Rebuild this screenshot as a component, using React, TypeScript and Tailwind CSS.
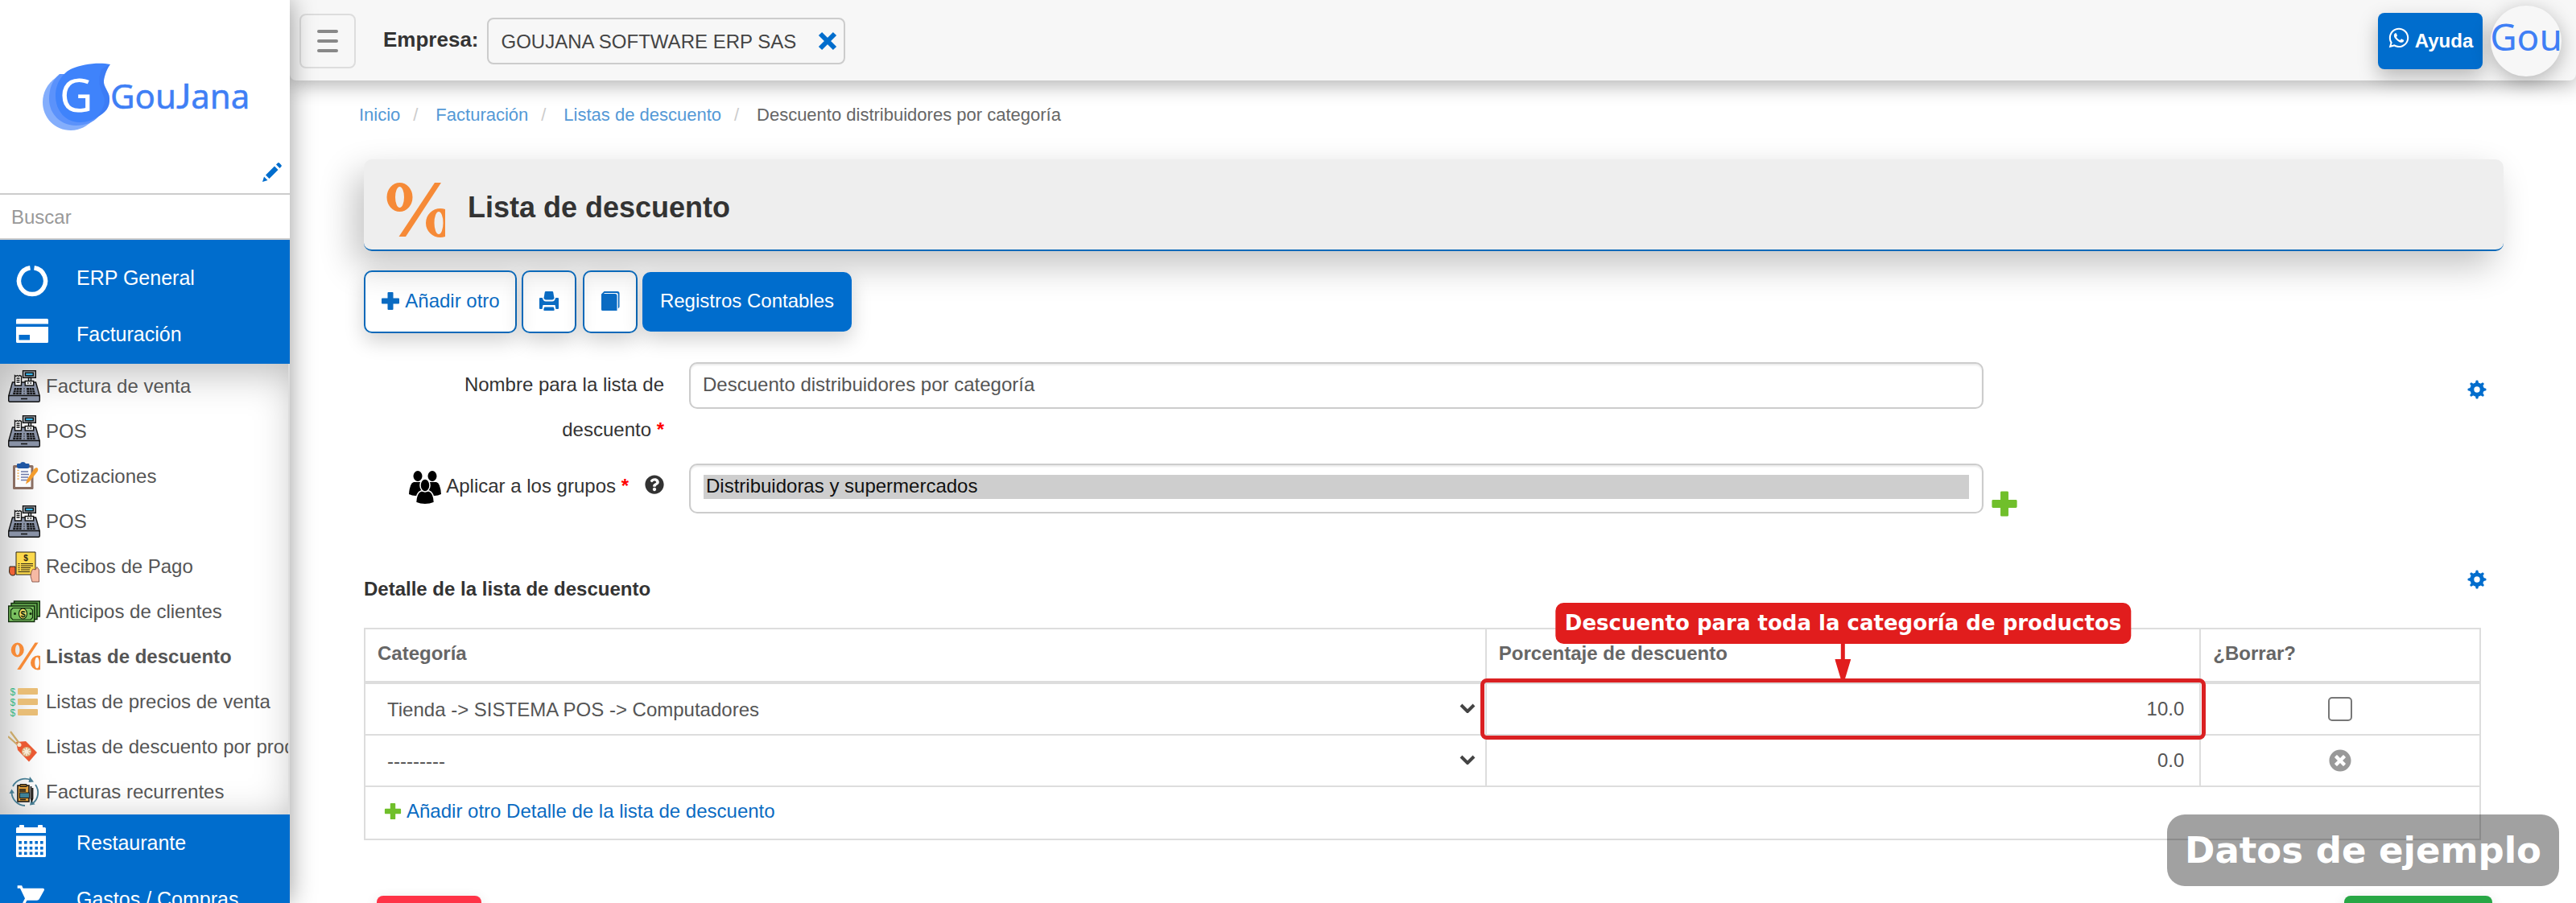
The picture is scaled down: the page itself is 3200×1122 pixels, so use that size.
import React from "react";
import { FaQuestionCircle, FaTimesCircle, FaWhatsapp } from "react-icons/fa";
import { MdShoppingCart } from "react-icons/md";

/* ---------- logo ---------- */

function Logo() {
  return (
    <svg viewBox="0 0 260 90" className="w-[260px]" role="img" aria-label="GouJana">
      <path d="M20 20 C8 28 3 40 3 51 C3 70 18 86 38 86 C50 86 58 80 64 75 L60 20 Z" fill="#84aefc" />
      <path d="M24 16 C14 24 11 36 11 47 C11 66 26 80 44 80 C56 80 66 76 72 69 L66 16 Z" fill="#5b92fb" />
      <path
        d="M87 4 C72 1 52 4 40 9 C28 14 19 27 19 43 C19 62 32 76 49 76 C58 76 66 73 72 69 C80 64 87 58 86 46 C86 38 78 32 79 24 C80 17 83 9 87 4 Z"
        fill="#3f83fb"
      />
      <path d="M76 10 C70 28 76 36 79 44 C82 54 76 62 70 70 C80 65 87 58 86 46 C86 38 78 32 79 24 C80 17 83 9 87 4 Z" fill="#3a74ee" opacity="0.4" />
      <text x="24" y="63" fontFamily="Noto Sans, sans-serif" fontSize="57" fill="#fff">G</text>
      <text x="87" y="59" fontFamily="Noto Sans, sans-serif" fontSize="42" fill="#3f7ff5" stroke="#3f7ff5" strokeWidth="0.5">
        Gou<tspan fontFamily="Lato, sans-serif" fontSize="43">J</tspan>ana
      </text>
    </svg>
  );
}

/* ---------- monochrome icons ---------- */

function PencilIcon() {
  return (
    <svg viewBox="0 0 24 24" className="size-6" fill="currentColor" aria-hidden="true">
      <path d="M0 24 L2 17.500 L6.500 22 Z" />
      <path d="M4 15.500 L15 4.500 L19.500 9 L8.500 20 Z" />
      <path d="M17 2.500 L19 .5 Q20 -.3 21 .6 L23.400 3 Q24.200 4 23.400 5 L21.500 7 Z" />
    </svg>
  );
}

function RingIcon() {
  return (
    <svg viewBox="0 0 40 40" className="mt-2 size-10" fill="none" aria-hidden="true">
      <path d="M22.500 3.800 A16.500 16.500 0 1 1 17.500 3.800" stroke="currentColor" strokeWidth="5.500" />
    </svg>
  );
}

function CardIcon() {
  return (
    <svg viewBox="0 0 40 40" className="mb-2 size-10" fill="currentColor" aria-hidden="true">
      <path d="M1.500 5 H38.500 Q40 5 40 6.500 V11.500 H0 V6.500 Q0 5 1.500 5Z" />
      <path fillRule="evenodd" d="M0 15 H40 V33.500 Q40 35 38.500 35 H1.500 Q0 35 0 33.500Z M3.500 25 V31.500 H17 V25Z" />
    </svg>
  );
}

function CalendarIcon() {
  const holes: [number, number][] = [];
  [20, 27, 33.5].forEach((y) => [3.3, 10, 16.7, 23.4, 30].forEach((x) => holes.push([x, y])));
  return (
    <svg viewBox="0 0 40 40" className="mb-1 size-10" aria-hidden="true">
      <path fill="currentColor" d="M4 3 V1 Q4 0 5 0 H9 Q10 0 10 1 V3 H27 V1 Q27 0 28 0 H32 Q33 0 33 1 V3 H35.500 Q37 3 37 4.500 V10 H0 V4.500 Q0 3 1.500 3Z" />
      <path fill="currentColor" d="M0 13.500 H37 V38.500 Q37 40 35.500 40 H1.500 Q0 40 0 38.500Z" />
      {holes.map(([x, y]) => (
        <rect key={`${x}-${y}`} x={x} y={y} width="3.600" height="3.600" fill="#006dcd" />
      ))}
    </svg>
  );
}

function GearIcon() {
  return (
    <svg viewBox="0 0 24 24" className="size-6" aria-hidden="true">
      <circle cx="12" cy="12" r="6.200" fill="none" stroke="currentColor" strokeWidth="5" />
      {[0, 45, 90, 135, 180, 225, 270, 315].map((a) => (
        <path key={a} d="M9.800 4.500 L10.700 .8 Q12 0 13.300 .8 L14.200 4.500Z" fill="currentColor" transform={`rotate(${a} 12 12)`} />
      ))}
    </svg>
  );
}

function PlusIcon({ className }: { className: string }) {
  return (
    <svg viewBox="0 0 24 24" className={className} fill="currentColor" aria-hidden="true">
      <path d="M9.500 1 H14.500 Q15.500 1 15.500 2 V8.500 H22 Q23 8.500 23 9.500 V14.500 Q23 15.500 22 15.500 H15.500 V22 Q15.500 23 14.500 23 H9.500 Q8.500 23 8.500 22 V15.500 H2 Q1 15.500 1 14.500 V9.500 Q1 8.500 2 8.500 H8.500 V2 Q8.500 1 9.500 1Z" />
    </svg>
  );
}

function CrossIcon() {
  return (
    <svg viewBox="0 0 24 24" className="size-6" aria-hidden="true">
      <path d="M3 3 L21 21 M21 3 L3 21" stroke="currentColor" strokeWidth="6" />
    </svg>
  );
}

function PrinterIcon() {
  return (
    <svg viewBox="0 0 24 24" className="size-6" fill="currentColor" aria-hidden="true">
      <path d="M8 0 H16 Q17 0 17.200 1 L18.500 8.500 Q17.500 10.500 16 10.500 H8 Q6.500 10.500 5.500 8.500 L6.800 1 Q7 0 8 0Z" />
      <path d="M0 9 Q0 8 1 8 H3.800 Q5 12.500 8 12.500 H16 Q19 12.500 20.200 8 H23 Q24 8 24 9 V21 Q24 22 23 22 H20.500 L19.500 17 H4.500 L3.500 22 H1 Q0 22 0 21Z" />
      <path d="M7 19.500 H17 Q18 19.500 18.200 20.500 L18.700 23 Q18.800 24 17.500 24 H6.500 Q5.200 24 5.300 23 L5.800 20.500 Q6 19.500 7 19.500Z" />
    </svg>
  );
}

function BookIcon() {
  return (
    <svg viewBox="0 0 24 24" className="size-6" fill="currentColor" aria-hidden="true">
      <path d="M1 3.500 L4.500 0 H21 Q23.500 0 23.500 2.500 V19.500 L21.800 21.500 V4 Q21.800 2 20 2 H5 L4 3 H18 Q20.500 3 20.500 5.500 V24 H2.500 Q1 24 1 22.500Z" />
    </svg>
  );
}

function PeopleIcon() {
  return (
    <svg viewBox="0 0 40 42" className="mt-1 w-10 shrink-0" aria-hidden="true">
      <g fill="#000">
        <ellipse cx="11" cy="6.500" rx="5.500" ry="6.500" />
        <ellipse cx="29" cy="6.500" rx="5.500" ry="6.500" />
        <path d="M6 14 Q1 15 0 29 Q8 33 16 29 V14Z" />
        <path d="M34 14 Q39 15 40 29 Q32 33 24 29 V14Z" />
      </g>
      <g fill="#000" stroke="#fff" strokeWidth="1.500">
        <path d="M15 25 Q9 27 8.500 39.500 Q20 44 31.500 39.500 Q31 27 25 25Z" />
        <ellipse cx="20" cy="18" rx="6" ry="8" />
      </g>
    </svg>
  );
}

/* ---------- coloured menu icons ---------- */

function RegisterIcon() {
  return (
    <svg viewBox="0 0 40 40" className="size-10 shrink-0" aria-hidden="true">
      <g stroke="#111" strokeWidth="1.400">
        <rect x="18.500" y=".7" width="15.800" height="8.600" fill="#a9b0b8" />
        <rect x="21.500" y="3.200" width="9.800" height="3.600" fill="#35b5ea" />
        <rect x="25.500" y="9.300" width="3" height="5" fill="#d6dade" />
        <path d="M5.500 15 H34.500 L39.300 32 H.7Z" fill="#8992a6" />
        <rect x="21.200" y="13.500" width="10.500" height="5.500" fill="#eef0f1" />
        <path d="M8.500 6.500 L10 7.500 L11.500 6.500 L13 7.500 L14.500 6.500 L16.500 7.500 V19 H8.500Z" fill="#fff" />
        <rect x=".7" y="31.500" width="38.600" height="7.800" rx="1.500" fill="#8992a6" />
      </g>
      <path d="M10.500 10 H14.500 M10.500 12.500 H14.500 M10.500 15 H14.500 M16 35.500 H24 M24 16 H25.500 M27.500 16 H29" stroke="#111" strokeWidth="1.300" />
      <path d="M8 22 H17 L16.500 30 H6Z M23 22 H32 L34 30 H23.500Z" fill="#111" />
      <path d="M7.500 25 H17 M7 27.700 H17 M10.500 22 L9.500 30 M14 22 L13.500 30 M23 25 H33 M23 27.700 H33.500 M26.500 22 L27 30 M29.500 22 L30.500 30" stroke="#8992a6" strokeWidth=".7" />
      <path d="M19 23 H21 M19 26 H21 M19 29 H21" stroke="#333" strokeWidth="1" />
    </svg>
  );
}

function ClipboardIcon() {
  return (
    <svg viewBox="0 0 40 40" className="size-10 shrink-0" aria-hidden="true">
      <rect x="6" y="6" width="25.500" height="30" rx="1.500" fill="#8a6e62" />
      <rect x="9" y="9" width="19.500" height="24" fill="#fafbfd" />
      <path d="M11 7.500 V5 Q11 4 12.500 4 H15 Q16 2 18.500 2 Q21 2 22 4 H25 Q26.500 4 26.500 5 V7.500 Q26.500 10 24 10 H13.500 Q11 10 11 7.500Z" fill="#1f57a4" />
      <path d="M16 14 H25 M16 17.500 H26 M16 21 H25 M16 24.500 H24" stroke="#6d79a8" strokeWidth="1.300" />
      <path d="M11.500 12.500 H13.500 M11.500 16 H13.500 M11.500 19.500 H13.500 M11.500 23 H13.500" stroke="#f3b04c" strokeWidth="1.700" />
      <path d="M22 29.500 L23.500 24 L32.500 10.500 Q35 8 36.500 9.500 Q38 11 36.500 14 L26.500 26.500Z" fill="#f39c2c" />
    </svg>
  );
}

function ReceiptIcon() {
  return (
    <svg viewBox="0 0 40 40" className="size-10 shrink-0" aria-hidden="true">
      <path d="M10 2 H34 V30 H10Z" fill="#fcd94c" stroke="#2a2416" strokeWidth="1" />
      <path d="M2 20 H9 V29 Q9 31 6 31 Q2 31 1.500 26Z" fill="#ef6236" stroke="#2a2416" strokeWidth="1" />
      <text x="22" y="13" fontFamily="Liberation Sans, sans-serif" fontSize="10" fontWeight="700" fill="#2a2416" textAnchor="middle">$</text>
      <path d="M12.500 16.500 H14.500 M16 16.500 H31 M12.500 19 H14.500 M16 19 H31 M12.500 21.500 H14.500 M16 21.500 H28 M12.500 24 H14.500 M16 24 H27 M12.500 26.500 H27" stroke="#2a2416" strokeWidth="1.100" />
      <path d="M29 26 L31 23 L34 24 L36 20.500 L38.500 24 V39 H30 L28 32Z" fill="#f6b9a4" stroke="#7a4438" strokeWidth=".8" />
    </svg>
  );
}

function CashIcon() {
  return (
    <svg viewBox="0 0 40 40" className="size-10 shrink-0" aria-hidden="true">
      <g fill="#5fa34c" stroke="#102a0c" strokeWidth="1.400">
        <rect x="7.500" y="7" width="32" height="19" />
        <rect x="4" y="9.500" width="32" height="20" />
        <rect x=".7" y="13" width="32" height="19.500" fill="#79bf5f" />
      </g>
      <path d="M6 15.500 H28 L30.500 18 V27.500 L28 30 H6 L3.500 27.500 V18Z" fill="none" stroke="#102a0c" strokeWidth="1.200" />
      <circle cx="8.500" cy="22.500" r="1.500" fill="#102a0c" />
      <circle cx="28" cy="22.500" r="1.500" fill="#102a0c" />
      <ellipse cx="18.500" cy="22.500" rx="5" ry="6.500" fill="#f2e26b" stroke="#102a0c" strokeWidth="1.200" />
      <text x="18.500" y="26.500" fontFamily="Liberation Sans, sans-serif" fontSize="11" fontWeight="700" fill="#102a0c" textAnchor="middle">$</text>
    </svg>
  );
}

function PercentIcon({ className }: { className: string }) {
  return (
    <svg viewBox="0 0 74 80" preserveAspectRatio="xMaxYMid meet" className={className} fill="#f68a37" aria-hidden="true">
      <path fillRule="evenodd" d="M17.500 5 A16 18 0 0 1 17.500 41 A16 18 0 0 1 17.500 5Z M17.500 10 A5.500 13 0 0 0 17.500 36 A5.500 13 0 0 0 17.500 10Z" />
      <path d="M61 5 H69 L25 72 H16.500Z" />
      <path fillRule="evenodd" d="M68 37 A18 18 0 0 0 68 73 A18 18 0 0 0 68 37Z M66 41 A5.500 14 0 0 1 66 69 A5.500 14 0 0 1 66 41Z" />
    </svg>
  );
}

function PriceListIcon() {
  return (
    <svg viewBox="0 0 40 40" className="size-10 shrink-0" aria-hidden="true">
      {[3, 16, 29].map((y) => (
        <g key={y}>
          <rect x="12" y={y} width="25" height="8" rx="1" fill="#e8bd76" />
          <text x="2.500" y={y + 9} fontFamily="Liberation Sans, sans-serif" fontSize="12" fill="#35b583">$</text>
        </g>
      ))}
    </svg>
  );
}

function TagIcon() {
  return (
    <svg viewBox="0 0 40 40" className="size-10 shrink-0" aria-hidden="true">
      <path d="M10 14 L22 13 L36 27 L26 38.500 L12 24Z" fill="#ea5a33" />
      <path d="M0 7 L13 18.500 M3 1 L15 17" stroke="#c9a868" strokeWidth="2.200" />
      <circle cx="14" cy="17.500" r="2.500" fill="#f7e5cd" />
      <circle cx="23" cy="26" r="6" fill="#d9b17f" />
      <path d="M23 21 V31 M18 26 H28 M19.500 22.500 L26.500 29.500 M26.500 22.500 L19.500 29.500" stroke="#f8ecd9" strokeWidth="1.600" />
    </svg>
  );
}

function RecurringIcon() {
  return (
    <svg viewBox="0 0 40 40" className="size-10 shrink-0" aria-hidden="true">
      <g fill="none" stroke="#467c92" strokeWidth="1.800">
        <path d="M6 13 A17 17 0 0 1 28 5" />
        <path d="M34 11 A17 17 0 0 1 31 34" />
        <path d="M21 37 A17 17 0 0 1 4.500 20" />
      </g>
      <path d="M27 1 L32 7.500 L25.500 8Z M27 36.500 L28.500 30 L33.500 35.500Z M1.500 22 L4.500 16.500 L8 21.500Z" fill="#467c92" />
      <rect x="12" y="12" width="14" height="20" fill="#e2a03a" stroke="#1c1a17" strokeWidth="1.600" />
      <path d="M15 13.500 V10.500 H23 V13.500Z" fill="#8b6526" stroke="#1c1a17" strokeWidth="1" />
      <rect x="14.500" y="21" width="12" height="6.500" fill="#3f8196" stroke="#1c1a17" strokeWidth="1" />
      <path d="M14 17 H22 M14 19 H22 M15 29.500 H22" stroke="#1c1a17" strokeWidth="1.300" />
      <path d="M28.500 13 V28 L29.500 31 L30.500 28 V15" stroke="#1c1a17" strokeWidth="1.800" fill="none" />
    </svg>
  );
}

/* ---------- sidebar ---------- */

function MenuLink({ icon, label }: { icon: React.ReactNode; label: string }) {
  return (
    <a href="#" className="flex h-[70px] items-center gap-[35px] pl-5 text-[25px] leading-8 text-white">
      {icon}
      <span>{label}</span>
    </a>
  );
}

const submenu: { label: string; icon: React.ReactNode; active?: boolean }[] = [
  { label: "Factura de venta", icon: <RegisterIcon /> },
  { label: "POS", icon: <RegisterIcon /> },
  { label: "Cotizaciones", icon: <ClipboardIcon /> },
  { label: "POS", icon: <RegisterIcon /> },
  { label: "Recibos de Pago", icon: <ReceiptIcon /> },
  { label: "Anticipos de clientes", icon: <CashIcon /> },
  { label: "Listas de descuento", icon: <PercentIcon className="size-10 shrink-0" />, active: true },
  { label: "Listas de precios de venta", icon: <PriceListIcon /> },
  { label: "Listas de descuento por producto", icon: <TagIcon /> },
  { label: "Facturas recurrentes", icon: <RecurringIcon /> },
];

function Sidebar() {
  return (
    <aside className="z-20 flex w-[360px] shrink-0 flex-col overflow-hidden bg-white shadow-[0_0_30px_rgba(0,0,0,0.4)]">
      <div className="flex h-[242px] shrink-0 flex-col justify-between border-b-2 border-[#ccc] pt-[76px]">
        <div className="pl-[50px]">
          <Logo />
        </div>
        <button type="button" aria-label="Editar menú" className="mr-[10px] mb-[14px] self-end text-[#006dcd]">
          <PencilIcon />
        </button>
      </div>
      <input
        type="text"
        placeholder="Buscar"
        aria-label="Buscar"
        className="h-14 shrink-0 border-b-2 border-[#ccc] px-[14px] pt-[2px] text-2xl text-[#555] outline-none placeholder:text-[#999]"
      />
      <nav className="flex flex-col">
        <div className="bg-[#006dcd] pt-3 pb-[2px]">
          <MenuLink icon={<RingIcon />} label="ERP General" />
          <MenuLink icon={<CardIcon />} label="Facturación" />
        </div>
        <ul className="border-r-2 border-[#ddd] shadow-[inset_10px_10px_50px_rgba(0,0,0,0.28)]">
          {submenu.map((item, i) => (
            <li key={i}>
              <a
                href="#"
                className={`flex h-14 items-center gap-[7px] overflow-hidden pl-[10px] text-2xl whitespace-nowrap text-[#555] ${
                  item.active ? "font-bold" : ""
                }`}
              >
                {item.icon}
                <span>{item.label}</span>
              </a>
            </li>
          ))}
        </ul>
        <div className="bg-[#006dcd]">
          <MenuLink icon={<CalendarIcon />} label="Restaurante" />
          <MenuLink icon={<MdShoppingCart className="size-10" />} label="Gastos / Compras" />
        </div>
      </nav>
    </aside>
  );
}

/* ---------- header ---------- */

function Header() {
  return (
    <header className="flex h-[100px] shrink-0 items-center rounded-b-lg bg-[#f7f7f7] pt-[2px] pr-[18px] pl-3 shadow-[0_6px_24px_rgba(0,0,0,0.3)]">
      <button
        type="button"
        aria-label="Mostrar u ocultar menú"
        className="flex h-[68px] w-[70px] flex-col items-center justify-center gap-2 rounded-lg border-2 border-[#ddd]"
      >
        <span className="h-1 w-[26px] rounded-full bg-[#888]" />
        <span className="h-1 w-[26px] rounded-full bg-[#888]" />
        <span className="h-1 w-[26px] rounded-full bg-[#888]" />
      </button>
      <label htmlFor="empresa" className="ml-[34px] pb-1 text-[26px] leading-8 font-bold text-[#333]">
        Empresa:
      </label>
      <div className="ml-[10px] flex h-[58px] w-[445px] items-center rounded-lg border-2 border-[#ccc] pr-2 pl-4">
        <select id="empresa" className="min-w-0 flex-1 appearance-none bg-transparent pt-px text-2xl text-[#444] outline-none">
          <option>GOUJANA SOFTWARE ERP SAS</option>
        </select>
        <button type="button" aria-label="Quitar empresa" className="text-[#006dcd]">
          <CrossIcon />
        </button>
      </div>
      <div className="ml-auto flex items-center gap-[10px]">
        <a
          href="#"
          className="flex h-[70px] w-[130px] items-center justify-center gap-[6px] rounded-lg bg-[#006dcd] text-2xl font-bold text-white shadow-[0_10px_24px_rgba(0,0,0,0.25)]"
        >
          <FaWhatsapp className="mb-2 size-7" aria-hidden="true" />
          Ayuda
        </a>
        <button
          type="button"
          className="flex size-[88px] items-center justify-center overflow-hidden rounded-full bg-[#f7f7f7] pb-3 font-['Noto_Sans'] text-[46px] leading-none text-[#3f7ff5] shadow-[0_6px_24px_rgba(0,0,0,0.28)]"
        >
          Gou
        </button>
      </div>
    </header>
  );
}

/* ---------- content ---------- */

function Breadcrumbs() {
  const links = ["Inicio", "Facturación", "Listas de descuento"];
  return (
    <nav aria-label="Ruta" className="-ml-[6px] text-[22px] leading-8">
      <ol className="flex">
        {links.map((l) => (
          <li key={l} className="flex">
            <a href="#" className="text-[#5499d6]">{l}</a>
            <span className="w-11 pl-4 text-[#ccc]">/</span>
          </li>
        ))}
        <li className="text-[#666]">Descuento distribuidores por categoría</li>
      </ol>
    </nav>
  );
}

function Toolbar() {
  const outline =
    "flex h-[78px] items-center justify-center gap-[6px] rounded-[10px] border-2 border-[#0b69b9] pb-[2px] text-[#0a6bc2] shadow-[0_10px_24px_rgba(0,0,0,0.18)]";
  return (
    <div className="mt-6 flex items-center text-2xl">
      <button type="button" className={`${outline} w-[190px]`}>
        <PlusIcon className="size-6" />
        Añadir otro
      </button>
      <button type="button" aria-label="Imprimir" className={`${outline} ml-[6px] w-[68px]`}>
        <PrinterIcon />
      </button>
      <button type="button" aria-label="Libro" className={`${outline} ml-2 w-[68px]`}>
        <BookIcon />
      </button>
      <button
        type="button"
        className="ml-[6px] h-[74px] w-[260px] rounded-[10px] bg-[#006dcd] pb-[2px] text-white shadow-[0_10px_24px_rgba(0,0,0,0.18)]"
      >
        Registros Contables
      </button>
    </div>
  );
}

function CategorySelect({ id, value }: { id: string; value: string }) {
  return (
    <div className="relative">
      <select
        id={id}
        aria-label="Categoría"
        className="block h-[62px] w-full appearance-none bg-transparent pt-[2px] pr-12 pl-[27px] text-2xl text-[#555] outline-none"
      >
        <option>{value}</option>
      </select>
      <svg viewBox="0 0 20 12" className="pointer-events-none absolute top-6 right-3 w-5" aria-hidden="true">
        <path d="M2 2 L10 10 L18 2" fill="none" stroke="#444" strokeWidth="4" />
      </svg>
    </div>
  );
}

function Callout() {
  return (
    <div className="pointer-events-none absolute -inset-x-2 -top-2 -bottom-2 rounded-lg border-[5px] border-[#da2022]">
      <div className="absolute bottom-full left-1/2 mb-1 flex -translate-x-1/2 flex-col items-center">
        <span className="rounded-[10px] bg-[#e11d1d] px-3 py-2 font-['DejaVu_Sans'] text-[26px] leading-[35px] font-bold whitespace-nowrap text-white">
          Descuento para toda la categoría de productos
        </span>
        <svg viewBox="0 0 20 44" className="h-11 w-5" fill="#e11d1d" aria-hidden="true">
          <path d="M7.500 0 H12.500 V19 H20 L12.500 44 H7.500 L0 19 H7.500Z" />
        </svg>
      </div>
    </div>
  );
}

function DetailTable() {
  const cell = "border-2 border-[#ddd] p-0";
  const head = "h-[67px] border-2 border-b-4 border-[#ddd] px-[15px] pt-0 pb-1 text-left font-bold text-[#666]";
  const number = "block h-[60px] w-full bg-transparent pr-[19px] text-right text-2xl text-[#555] outline-none";
  return (
    <div className="mt-[30px] pr-7">
      <table className="w-full table-fixed border-collapse text-2xl">
        <thead>
          <tr>
            <th className={`${head} w-[53%]`}>Categoría</th>
            <th className={`${head} w-[33.770%]`}>Porcentaje de descuento</th>
            <th className={head}>¿Borrar?</th>
          </tr>
        </thead>
        <tbody>
          <tr>
            <td className={cell}>
              <CategorySelect id="categoria-1" value="Tienda -> SISTEMA POS -> Computadores" />
            </td>
            <td className={cell}>
              <div className="relative">
                <input type="text" aria-label="Porcentaje de descuento" defaultValue="10.0" className={number} />
                <Callout />
              </div>
            </td>
            <td className={cell}>
              <input
                type="checkbox"
                aria-label="Borrar"
                className="mx-auto block size-[30px] appearance-none rounded-[5px] border-2 border-[#777] bg-white"
              />
            </td>
          </tr>
          <tr>
            <td className={cell}>
              <CategorySelect id="categoria-2" value="---------" />
            </td>
            <td className={cell}>
              <input type="text" aria-label="Porcentaje de descuento" defaultValue="0.0" className={number} />
            </td>
            <td className={cell}>
              <button type="button" aria-label="Quitar fila" className="mx-auto block text-[#999]">
                <FaTimesCircle className="size-7" />
              </button>
            </td>
          </tr>
          <tr>
            <td colSpan={3} className={`${cell} h-[66px]`}>
              <a href="#" className="inline-flex items-center gap-[6px] pb-1 pl-[23px] text-[#0a6bc2]">
                <PlusIcon className="size-[22px] text-[#70bf2b]" />
                Añadir otro Detalle de la lista de descuento
              </a>
            </td>
          </tr>
        </tbody>
      </table>
    </div>
  );
}

function Required() {
  return <span className="font-bold text-[#f00]">*</span>;
}

function DiscountForm() {
  const field = "rounded-[10px] border-2 border-[#ccc] bg-white shadow-[inset_0_2px_2px_rgba(0,0,0,0.08)] outline-none";
  return (
    <form>
      <div className="mt-9 flex items-start pr-[21px]">
        <label htmlFor="nombre" className="w-[373px] pl-16 text-right text-2xl leading-[56px] text-[#333]">
          Nombre para la lista de descuento <Required />
        </label>
        <input
          id="nombre"
          type="text"
          defaultValue="Descuento distribuidores por categoría"
          className={`${field} ml-[31px] h-[58px] min-w-0 flex-1 px-[15px] pb-[2px] text-2xl text-[#555]`}
        />
        <button type="button" aria-label="Configurar datos" className="mt-[22px] ml-[601px] text-[#006dcd]">
          <GearIcon />
        </button>
      </div>
      <div className="mt-[14px] flex items-start pr-[21px]">
        <div className="flex w-[373px] items-center justify-end text-2xl leading-[56px] text-[#333]">
          <PeopleIcon />
          <label htmlFor="grupos" className="pl-[6px]">
            Aplicar a los grupos <Required />
          </label>
          <FaQuestionCircle className="mb-1 ml-5 size-6" aria-label="Ayuda" />
        </div>
        <select
          id="grupos"
          multiple
          size={1}
          defaultValue={["1"]}
          className={`${field} ml-[31px] h-[62px] min-w-0 flex-1 overflow-hidden px-4 py-3 text-2xl`}
        >
          <option value="1" className="h-[30px] px-[3px] py-0 leading-[30px] text-[#111]">
            Distribuidoras y supermercados
          </option>
        </select>
        <button type="button" aria-label="Añadir grupo" className="mt-[33px] ml-[9px] w-[616px] text-[#70bf2b]">
          <PlusIcon className="size-[34px]" />
        </button>
      </div>

      <div className="mt-[60px] flex items-start justify-between pr-[21px]">
        <h2 className="mt-[11px] text-2xl leading-9 font-bold text-[#333]">Detalle de la lista de descuento</h2>
        <button type="button" aria-label="Configurar detalle" className="mt-[5px] text-[#006dcd]">
          <GearIcon />
        </button>
      </div>
      <DetailTable />

      <div className="mt-[69px] flex justify-between pr-[14px] pl-4">
        <button type="button" aria-label="Eliminar" className="h-[74px] w-[130px] rounded-lg bg-[#ff3347] shadow-[0_4px_16px_rgba(0,0,0,0.12)]" />
        <button type="submit" aria-label="Guardar" className="h-[74px] w-[184px] rounded-lg bg-[#28a745] shadow-[0_4px_16px_rgba(0,0,0,0.12)]" />
      </div>
    </form>
  );
}

export default function App() {
  return (
    <div className="relative flex h-screen overflow-hidden bg-white font-['Liberation_Sans',Arial,sans-serif]">
      <Sidebar />
      <div className="flex min-w-0 flex-1 flex-col">
        <Header />
        <main className="pt-[27px] pr-[90px] pl-[92px]">
          <Breadcrumbs />
          <div className="mt-[39px] flex h-[114px] items-center gap-7 rounded-[10px] border-b-2 border-[#0b69b9] bg-[#eee] pl-[27px] shadow-[-12px_18px_44px_rgba(0,0,0,0.24)]">
            <PercentIcon className="mt-4 h-20 w-[74px]" />
            <h1 className="mt-2 text-4xl font-bold text-[#333]">Lista de descuento</h1>
          </div>
          <Toolbar />
          <DiscountForm />
        </main>
      </div>
      <div className="absolute right-[21px] bottom-[21px] z-30 rounded-[22px] bg-black/37 px-[22px] py-[14px] font-['DejaVu_Sans'] text-[45px] leading-[61px] font-bold text-white">
        Datos de ejemplo
      </div>
    </div>
  );
}
